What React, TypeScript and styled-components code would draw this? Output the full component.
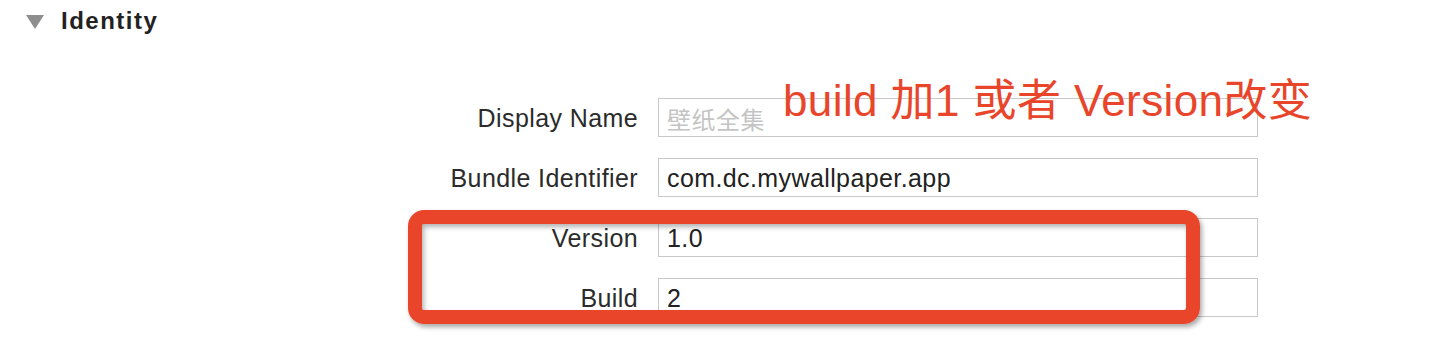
import React from "react";
import styled, { createGlobalStyle } from "styled-components";

const GlobalStyle = createGlobalStyle`
  html, body {
    margin: 0;
    padding: 0;
    background: #ffffff;
  }
  body {
    font-family: "Liberation Sans", "Noto Sans CJK SC", sans-serif;
    color: #262626;
  }
`;

const Page = styled.div`
  width: 1431px;
  height: 364px;
  padding-top: 6px;
  box-sizing: border-box;
  overflow: hidden;
`;

const SectionHeader = styled.div`
  display: flex;
  align-items: center;
  gap: 17px;
  height: 30px;
  padding-left: 26px;
`;

const Disclosure = styled.span`
  width: 0;
  height: 0;
  border-left: 9.5px solid transparent;
  border-right: 9.5px solid transparent;
  border-top: 14px solid #8e8e8e;
  margin-top: 1px;
`;

const SectionTitle = styled.span`
  font-size: 24px;
  font-weight: 700;
  letter-spacing: 1.5px;
  color: #222222;
`;

const Form = styled.div`
  position: relative;
  display: grid;
  grid-template-columns: 638px 600px;
  grid-auto-rows: 39px;
  column-gap: 20px;
  row-gap: 21px;
  margin-top: 62px;
`;

const Label = styled.div`
  display: flex;
  align-items: center;
  justify-content: flex-end;
  padding-top: 2px;
  font-size: 25px;
  letter-spacing: 0.4px;
  color: #2b2b2b;
`;

const Field = styled.div<{ $placeholder?: boolean }>`
  display: flex;
  align-items: center;
  box-sizing: border-box;
  border: 1px solid #c9c9c9;
  padding: 2px 0 0 8px;
  font-size: ${(p) => (p.$placeholder ? "24px" : "25px")};
  letter-spacing: ${(p) => (p.$placeholder ? "0.5px" : "0.4px")};
  color: ${(p) => (p.$placeholder ? "#c4c4c4" : "#222222")};
  background: #ffffff;
`;

const Note = styled.div`
  position: absolute;
  left: 783px;
  top: -19px;
  font-size: 44px;
  line-height: 44px;
  letter-spacing: 0.4px;
  color: #e8452b;
  white-space: nowrap;
`;

const Highlight = styled.div`
  position: absolute;
  left: 408px;
  top: 112px;
  width: 792px;
  height: 114px;
  box-sizing: border-box;
  border: 14px solid #e8452b;
  border-radius: 16px;
  box-shadow: 2px 3px 5px rgba(0, 0, 0, 0.35),
    inset 2px 3px 5px rgba(0, 0, 0, 0.3);
  pointer-events: none;
`;

const rows = [
  { label: "Display Name", value: "壁纸全集", placeholder: true },
  { label: "Bundle Identifier", value: "com.dc.mywallpaper.app" },
  { label: "Version", value: "1.0" },
  { label: "Build", value: "2" },
];

export default function App() {
  return (
    <Page>
      <GlobalStyle />
      <SectionHeader>
        <Disclosure />
        <SectionTitle>Identity</SectionTitle>
      </SectionHeader>
      <Form>
        {rows.map((row) => (
          <React.Fragment key={row.label}>
            <Label>{row.label}</Label>
            <Field $placeholder={row.placeholder}>{row.value}</Field>
          </React.Fragment>
        ))}
        <Note>build 加1 或者 Version改变</Note>
        <Highlight />
      </Form>
    </Page>
  );
}
